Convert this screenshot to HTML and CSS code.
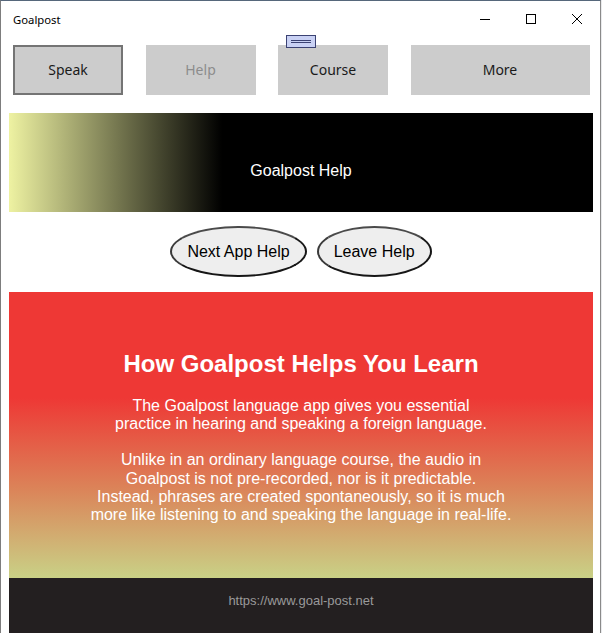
FILE: index.html
```html
<!DOCTYPE html>
<html lang="en">
<head>
<meta charset="utf-8">
<title>Goalpost</title>
<link rel="stylesheet" href="styles.css">
</head>
<body>
<div class="window">
  <div class="titlebar">
    <span class="title">Goalpost</span>
    <div class="controls">
      <span class="ctl"><svg width="10" height="10" viewBox="0 0 10 10"><line x1="0" y1="5.5" x2="10" y2="5.5" stroke="#000" stroke-width="1"/></svg></span>
      <span class="ctl"><svg width="10" height="10" viewBox="0 0 10 10"><rect x="0.5" y="0.5" width="9" height="9" fill="none" stroke="#000" stroke-width="1"/></svg></span>
      <span class="ctl"><svg width="10" height="10" viewBox="0 0 10 10"><line x1="0" y1="0" x2="10" y2="10" stroke="#000" stroke-width="1"/><line x1="10" y1="0" x2="0" y2="10" stroke="#000" stroke-width="1"/></svg></span>
    </div>
  </div>
  <div class="grip"><svg width="30" height="13" viewBox="0 0 30 13"><rect x="0.5" y="0.5" width="29" height="12" fill="#c9d1f4" stroke="#3b4273" stroke-width="1"/><line x1="5" y1="5.5" x2="25" y2="5.5" stroke="#3b4273" stroke-width="1"/><line x1="5" y1="7.5" x2="25" y2="7.5" stroke="#3b4273" stroke-width="1"/></svg></div>
  <div class="content">
    <nav class="tabs">
      <button class="tab tab-active">Speak</button>
      <button class="tab tab-disabled">Help</button>
      <button class="tab">Course</button>
      <button class="tab">More</button>
    </nav>
    <div class="banner">Goalpost Help</div>
    <div class="pills">
      <button class="pill">Next App Help</button>
      <button class="pill">Leave Help</button>
    </div>
    <section class="info">
      <h1 class="info-title">How Goalpost Helps You Learn</h1>
      <p class="info-text info-lead">The Goalpost language app gives you essential<br>practice in hearing and speaking a foreign language.</p>
      <p class="info-text">Unlike in an ordinary language course, the audio in<br>Goalpost is not pre-recorded, nor is it predictable.<br>Instead, phrases are created spontaneously, so it is much<br>more like listening to and speaking the language in real-life.</p>
    </section>
    <footer class="footer">https://www.goal-post.net</footer>
  </div>
</div>
</body>
</html>
```
FILE: styles.css
```css
html, body {
  margin: 0;
  padding: 0;
  background: #e9eaec;
}
.window {
  position: relative;
  width: 599px;
  height: 632px;
  background: #ffffff;
  border-left: 1px solid #7d7d7d;
  border-right: 1px solid #8a8a8a;
  border-top: 1px solid #56677b;
  overflow: hidden;
}
.titlebar {
  display: flex;
  align-items: center;
  height: 36px;
}
.title {
  padding-left: 12px;
  font-family: "Noto Sans", "Open Sans", sans-serif;
  font-size: 11.3px;
  color: #000;
  flex: 1;
}
.controls {
  display: flex;
  height: 36px;
}
.ctl {
  width: 46px;
  display: flex;
  align-items: center;
  justify-content: center;
}
.ctl svg { display: block; }
.grip {
  position: absolute;
  left: 285px;
  top: 34px;
  z-index: 2;
}
.grip svg { display: block; }
.content {
  padding: 0 7px 0 8px;
}
.tabs {
  display: grid;
  grid-template-columns: 110px 110px 110px 179px;
  column-gap: 22.5px;
  padding: 8px 0 0 4px;
}
.tab {
  height: 50px;
  box-sizing: border-box;
  margin: 0;
  padding: 0 0 2px;
  border: none;
  background: #cccccc;
  font-family: "Noto Sans", "Open Sans", sans-serif;
  font-size: 14px;
  color: #1a1a1a;
}
.tab-active {
  border: 2px solid #747474;
}
.tab-disabled {
  color: #8c8c8c;
}
.banner {
  margin-top: 18px;
  height: 99px;
  box-sizing: border-box;
  padding-top: 16px;
  display: flex;
  align-items: center;
  justify-content: center;
  background: linear-gradient(to right, #eef2a2 0%, #000000 36.5%, #000000 100%);
  color: #ffffff;
  font-family: "Liberation Sans", Arial, sans-serif;
  font-size: 16px;
}
.pills {
  display: flex;
  justify-content: center;
  gap: 10px;
  padding: 14px 0 15px;
}
.pill {
  height: 51px;
  margin: 0;
  padding: 0 15px;
  border: 2px solid #161616;
  border-top-color: #4a4a4a;
  border-left-color: #3a3a3a;
  border-radius: 50%;
  background: #eeeeee;
  font-family: "Liberation Sans", Arial, sans-serif;
  font-size: 16px;
  color: #000;
}
.info {
  height: 286px;
  box-sizing: border-box;
  padding-top: 57.5px;
  text-align: center;
  color: #ffffff;
  font-family: "Liberation Sans", Arial, sans-serif;
  background: linear-gradient(to bottom, #ee3835 0%, #ee3835 37%, #db8459 69%, #c9d186 100%);
}
.info-title {
  margin: 0;
  font-size: 24px;
  font-weight: bold;
  line-height: 27px;
}
.info-text {
  margin: 18px 0 0;
  font-size: 16px;
  line-height: 18.2px;
  white-space: nowrap;
}
.info-lead {
  margin-top: 20.5px;
}
.footer {
  height: 60px;
  box-sizing: border-box;
  padding-top: 15px;
  background: #231f20;
  color: #9a9a9a;
  text-align: center;
  font-family: "Liberation Sans", Arial, sans-serif;
  font-size: 13px;
}
```
